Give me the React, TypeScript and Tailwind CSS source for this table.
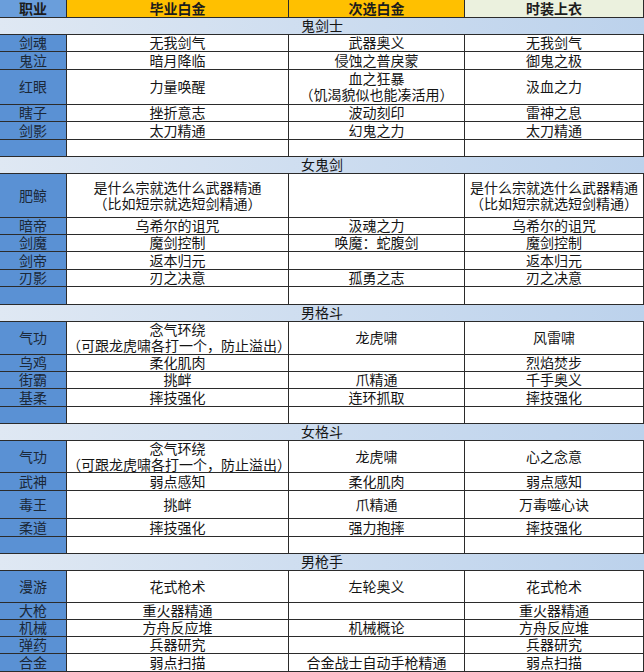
import React from "react";

type Row =
  | { kind: "sec"; label: string; h: number }
  | { kind: "row"; job: string; a: string; b: string; c: string; h: number };

const rows: Row[] = [
  { kind: "sec", label: "鬼剑士", h: 17 },
  { kind: "row", job: "剑魂", a: "无我剑气", b: "武器奥义", c: "无我剑气", h: 17 },
  { kind: "row", job: "鬼泣", a: "暗月降临", b: "侵蚀之普戾蒙", c: "御鬼之极", h: 18 },
  { kind: "row", job: "红眼", a: "力量唤醒", b: "血之狂暴\n（饥渴貌似也能凑活用）", c: "汲血之力", h: 35 },
  { kind: "row", job: "瞎子", a: "挫折意志", b: "波动刻印", c: "雷神之息", h: 17 },
  { kind: "row", job: "剑影", a: "太刀精通", b: "幻鬼之力", c: "太刀精通", h: 18 },
  { kind: "row", job: "", a: "", b: "", c: "", h: 17 },
  { kind: "sec", label: "女鬼剑", h: 17 },
  {
    kind: "row",
    job: "肥鲸",
    a: "是什么宗就选什么武器精通\n（比如短宗就选短剑精通）",
    b: "",
    c: "是什么宗就选什么武器精通\n（比如短宗就选短剑精通）",
    h: 44,
  },
  { kind: "row", job: "暗帝", a: "乌希尔的诅咒", b: "汲魂之力", c: "乌希尔的诅咒", h: 17 },
  { kind: "row", job: "剑魔", a: "魔剑控制", b: "唤魔：蛇腹剑", c: "魔剑控制", h: 17 },
  { kind: "row", job: "剑帝", a: "返本归元", b: "", c: "返本归元", h: 18 },
  { kind: "row", job: "刃影", a: "刃之决意", b: "孤勇之志", c: "刃之决意", h: 17 },
  { kind: "row", job: "", a: "", b: "", c: "", h: 18 },
  { kind: "sec", label: "男格斗", h: 17 },
  { kind: "row", job: "气功", a: "念气环绕\n（可跟龙虎啸各打一个，防止溢出）", b: "龙虎啸", c: "风雷啸", h: 33 },
  { kind: "row", job: "乌鸡", a: "柔化肌肉", b: "", c: "烈焰焚步", h: 17 },
  { kind: "row", job: "街霸", a: "挑衅", b: "爪精通", c: "千手奥义", h: 17 },
  { kind: "row", job: "基柔", a: "摔技强化", b: "连环抓取", c: "摔技强化", h: 18 },
  { kind: "row", job: "", a: "", b: "", c: "", h: 17 },
  { kind: "sec", label: "女格斗", h: 17 },
  { kind: "row", job: "气功", a: "念气环绕\n（可跟龙虎啸各打一个，防止溢出）", b: "龙虎啸", c: "心之念意", h: 32 },
  { kind: "row", job: "武神", a: "弱点感知", b: "柔化肌肉", c: "弱点感知", h: 18 },
  { kind: "row", job: "毒王", a: "挑衅", b: "爪精通", c: "万毒噬心诀", h: 28 },
  { kind: "row", job: "柔道", a: "摔技强化", b: "强力抱摔", c: "摔技强化", h: 18 },
  { kind: "row", job: "", a: "", b: "", c: "", h: 17 },
  { kind: "sec", label: "男枪手", h: 17 },
  { kind: "row", job: "漫游", a: "花式枪术", b: "左轮奥义", c: "花式枪术", h: 32 },
  { kind: "row", job: "大枪", a: "重火器精通", b: "", c: "重火器精通", h: 17 },
  { kind: "row", job: "机械", a: "方舟反应堆", b: "机械概论", c: "方舟反应堆", h: 17 },
  { kind: "row", job: "弹药", a: "兵器研究", b: "", c: "兵器研究", h: 17 },
  { kind: "row", job: "合金", a: "弱点扫描", b: "合金战士自动手枪精通", c: "弱点扫描", h: 18 },
];

function Cell({ text, className = "" }: { text: string; className?: string }) {
  return (
    <div
      className={`flex items-center justify-center whitespace-pre-line border-r border-b border-[#2b2b2b] text-center leading-[16px] ${className}`}
    >
      {text}
    </div>
  );
}

export default function App() {
  return (
    <div className="h-[672px] w-[644px] overflow-hidden bg-white font-['Liberation_Sans','Noto_Sans_CJK_SC',sans-serif] text-[14px] text-[#141414]">
      <div className="flex h-[18px] font-bold text-[#1c1c1c]">
        <Cell text="职业" className="w-[67px] bg-[#6a9edb]" />
        <Cell text="毕业白金" className="w-[222px] bg-[#ffc000]" />
        <Cell text="次选白金" className="w-[176px] bg-[#ffc000]" />
        <Cell text="时装上衣" className="flex-1 bg-[#ebf1de]" />
      </div>
      {rows.map((r, i) =>
        r.kind === "sec" ? (
          <div
            key={i}
            style={{ height: r.h }}
            className="flex items-center justify-center border-b border-[#2b2b2b] bg-gradient-to-r from-[#dfe8f3] to-[#bcd2ec] leading-[16px]"
          >
            {r.label}
          </div>
        ) : (
          <div key={i} style={{ height: r.h }} className="flex">
            <Cell text={r.job} className="w-[67px] bg-[#5a91d4] text-[#1b2838]" />
            <Cell text={r.a} className="w-[222px]" />
            <Cell text={r.b} className="w-[176px]" />
            <Cell text={r.c} className="flex-1" />
          </div>
        )
      )}
    </div>
  );
}
